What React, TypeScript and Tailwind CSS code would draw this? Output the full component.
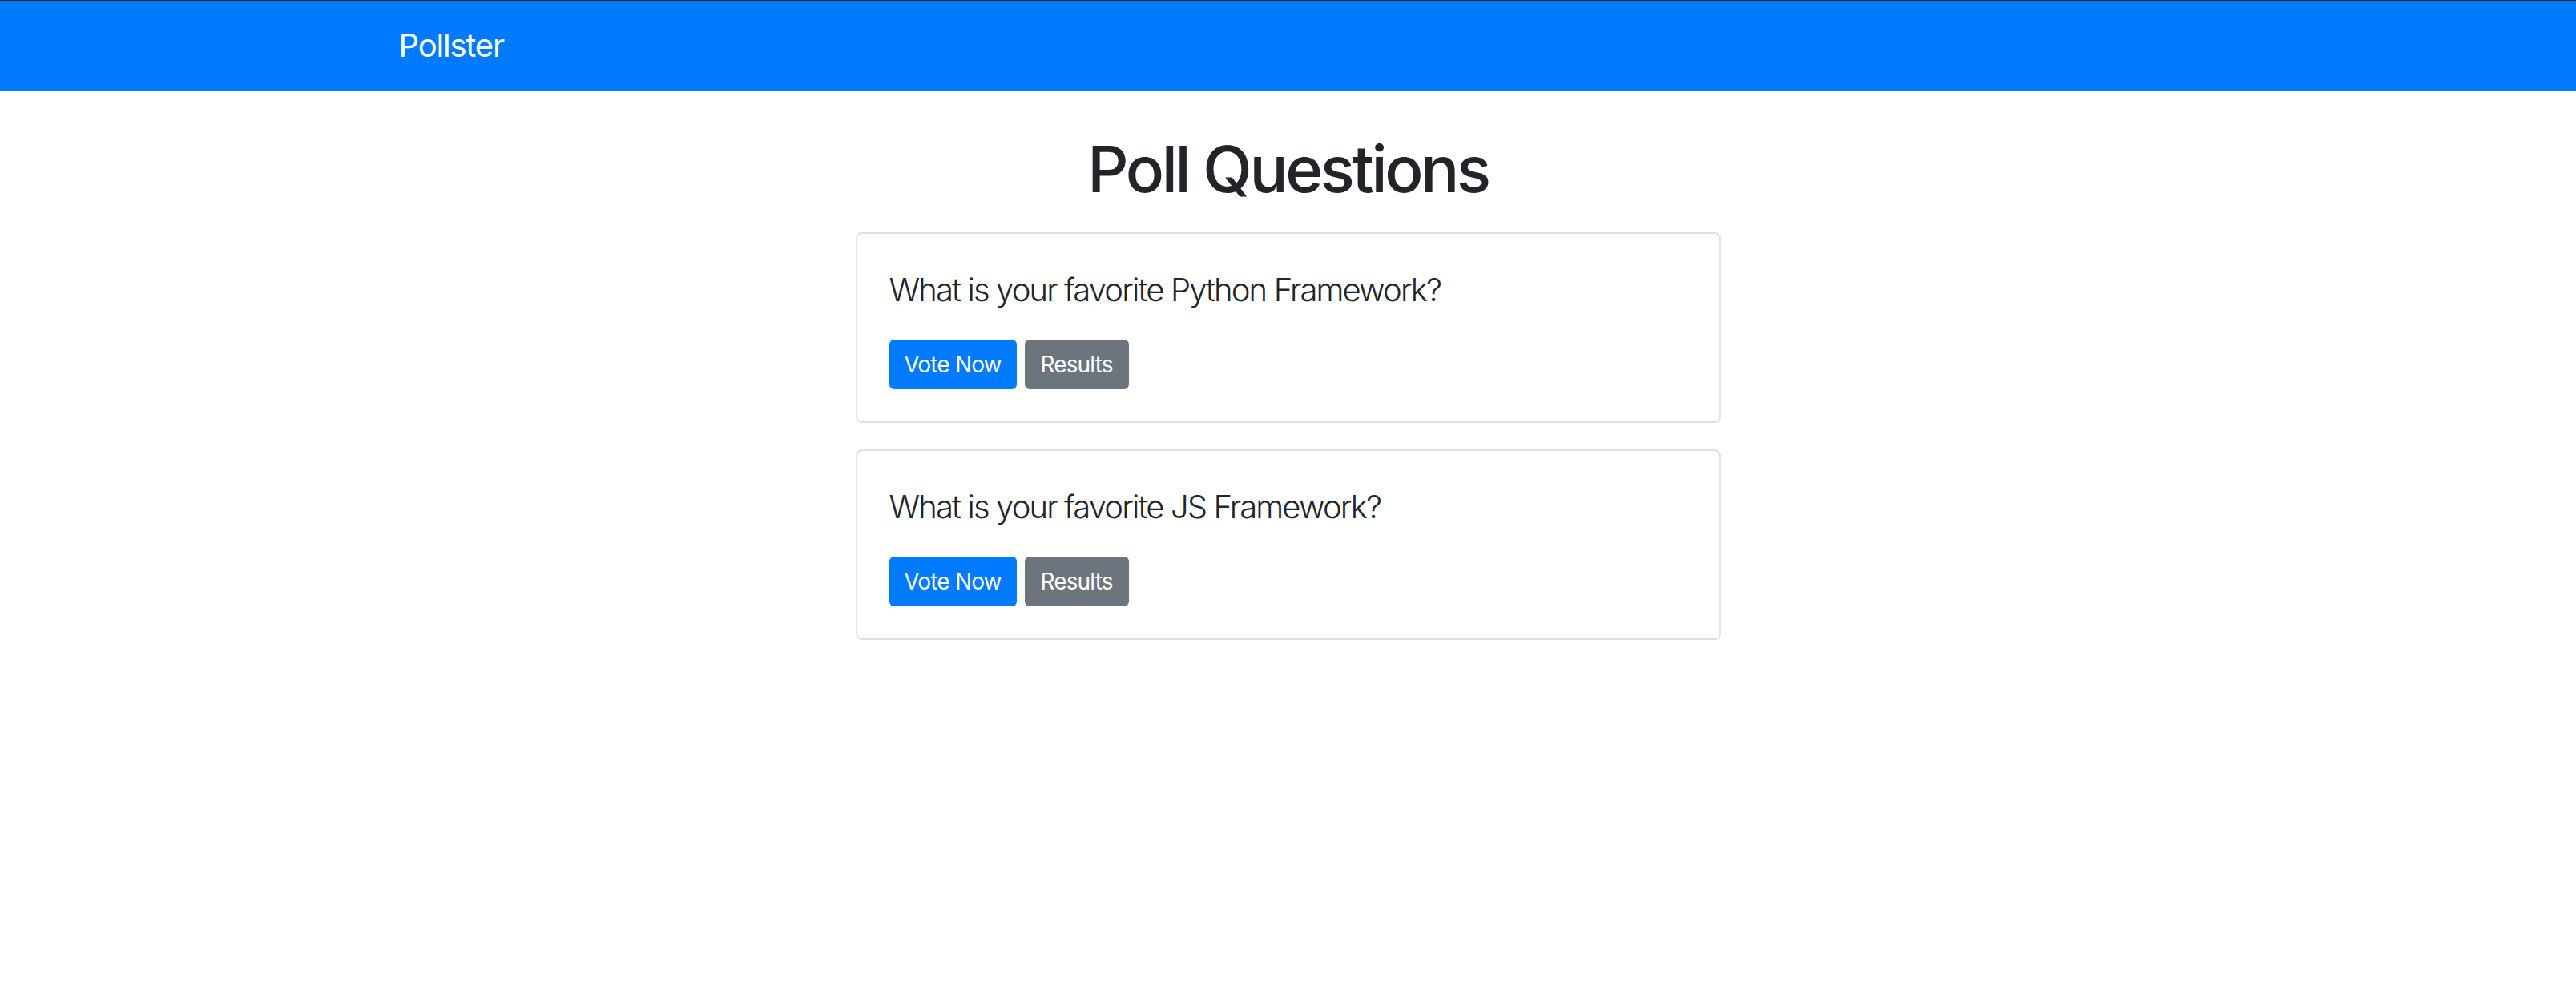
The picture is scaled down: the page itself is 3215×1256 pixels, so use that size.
const questions = [
  { id: 1, text: "What is your favorite Python Framework?" },
  { id: 2, text: "What is your favorite JS Framework?" },
];

const QuestionCard = ({ text }: { text: string }) => (
  <div className="mb-[33px] rounded-[8px] border-2 border-[#dfdfdf] bg-white p-[40px]">
    <p className="mb-[32px] text-[40px] font-light leading-[60px] tracking-[-0.047em] text-[#212529]">{text}</p>
    <div className="flex gap-[10px]">
      <a className="flex h-[62px] w-[159px] items-center justify-center rounded-[6px] bg-[#007bff] text-[28px] tracking-[-0.03em] text-white">
        Vote Now
      </a>
      <a className="flex h-[62px] w-[130px] items-center justify-center rounded-[6px] bg-[#6c757d] text-[28px] tracking-[-0.03em] text-white">
        Results
      </a>
    </div>
  </div>
);

export default function App() {
  return (
    <div className="min-h-screen bg-white font-['Inter','Noto_Sans',sans-serif] text-[#212529]">
      <nav className="h-[113px] border-t border-[#2b2b2b] bg-[#007bff]">
        <div className="mx-auto flex h-full max-w-[2280px] items-center px-[30px]">
          <a className="text-[40px] leading-[60px] tracking-[-0.03em] text-white">Pollster</a>
        </div>
      </nav>

      <div className="mx-auto max-w-[2280px] px-[30px]">
        <div className="mx-auto w-[1080px]">
          <h1 className="mb-[31px] mt-[50px] text-center text-[80px] font-medium leading-[96px] tracking-[-0.042em]">
            Poll Questions
          </h1>
          {questions.map((q) => (
            <QuestionCard key={q.id} text={q.text} />
          ))}
        </div>
      </div>
    </div>
  );
}
